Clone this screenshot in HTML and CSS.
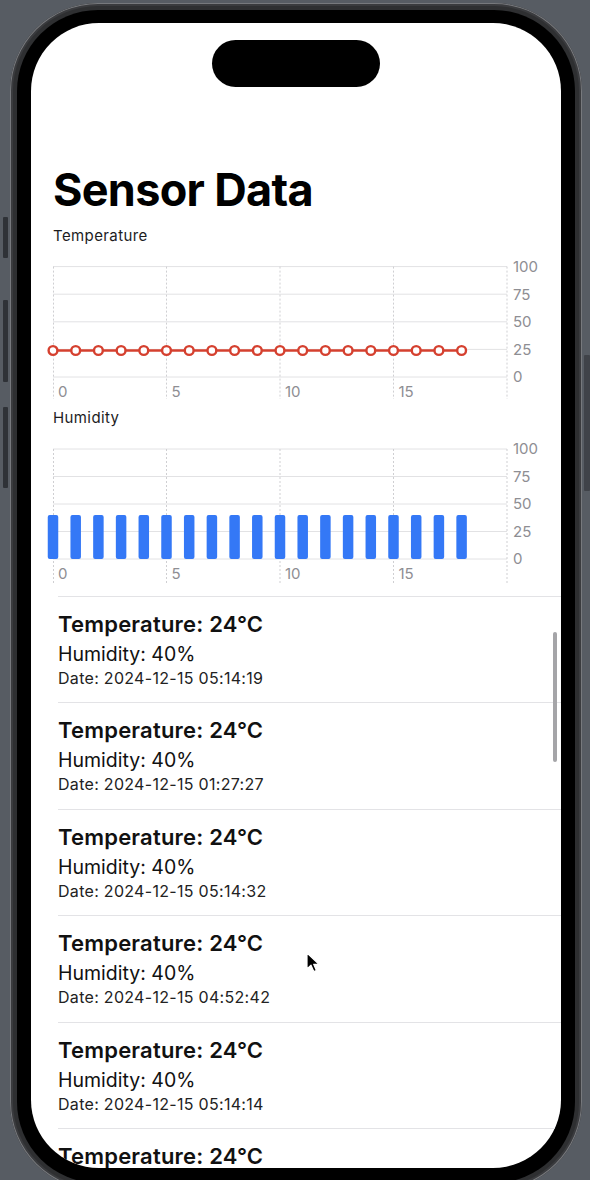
FILE: index.html
```html
<!DOCTYPE html>
<html lang="en">
<head>
<meta charset="utf-8">
<title>Sensor Data</title>
<link rel="stylesheet" href="styles.css">
</head>
<body>
<div class="phone">
  <span class="btn btn-action"></span>
  <span class="btn btn-vol-up"></span>
  <span class="btn btn-vol-down"></span>
  <span class="btn btn-power"></span>
  <div class="bezel">
    <div class="screen">
      <div class="island"></div>
      <h1 class="title">Sensor Data</h1>

      <div class="chart-label">Temperature</div>
      <svg class="chart" width="490" height="140" viewBox="0 0 490 140">
        <g class="hgrid">
          <line x1="0" y1="7.6" x2="454" y2="7.6"/>
          <line x1="0" y1="35.2" x2="454" y2="35.2"/>
          <line x1="0" y1="62.8" x2="454" y2="62.8"/>
          <line x1="0" y1="90.4" x2="454" y2="90.4"/>
          <line x1="0" y1="118" x2="454" y2="118"/>
        </g>
        <g class="vgrid">
          <line x1="0.5" y1="7.6" x2="0.5" y2="140"/>
          <line x1="113.5" y1="7.6" x2="113.5" y2="140"/>
          <line x1="227" y1="7.6" x2="227" y2="140"/>
          <line x1="340.5" y1="7.6" x2="340.5" y2="140"/>
          <line x1="454" y1="7.6" x2="454" y2="140"/>
        </g>
        <g class="ylabels">
          <text x="460" y="13">100</text>
          <text x="460" y="40.6">75</text>
          <text x="460" y="68.2">50</text>
          <text x="460" y="95.8">25</text>
          <text x="460" y="123.4">0</text>
        </g>
        <g class="xlabels">
          <text x="5" y="137.5">0</text>
          <text x="118.5" y="137.5">5</text>
          <text x="232" y="137.5">10</text>
          <text x="345.5" y="137.5">15</text>
        </g>
        <polyline class="temp-line" points="0,91.5 408.6,91.5"/>
        <g class="temp-dots">
          <circle cx="0" cy="91.5" r="4.4"/>
          <circle cx="22.7" cy="91.5" r="4.4"/>
          <circle cx="45.4" cy="91.5" r="4.4"/>
          <circle cx="68.1" cy="91.5" r="4.4"/>
          <circle cx="90.8" cy="91.5" r="4.4"/>
          <circle cx="113.5" cy="91.5" r="4.4"/>
          <circle cx="136.2" cy="91.5" r="4.4"/>
          <circle cx="158.9" cy="91.5" r="4.4"/>
          <circle cx="181.6" cy="91.5" r="4.4"/>
          <circle cx="204.3" cy="91.5" r="4.4"/>
          <circle cx="227" cy="91.5" r="4.4"/>
          <circle cx="249.7" cy="91.5" r="4.4"/>
          <circle cx="272.4" cy="91.5" r="4.4"/>
          <circle cx="295.1" cy="91.5" r="4.4"/>
          <circle cx="317.8" cy="91.5" r="4.4"/>
          <circle cx="340.5" cy="91.5" r="4.4"/>
          <circle cx="363.2" cy="91.5" r="4.4"/>
          <circle cx="385.9" cy="91.5" r="4.4"/>
          <circle cx="408.6" cy="91.5" r="4.4"/>
        </g>
      </svg>

      <div class="chart-label">Humidity</div>
      <svg class="chart" width="490" height="140" viewBox="0 0 490 140">
        <g class="hgrid">
          <line x1="0" y1="8" x2="454" y2="8"/>
          <line x1="0" y1="35.5" x2="454" y2="35.5"/>
          <line x1="0" y1="63" x2="454" y2="63"/>
          <line x1="0" y1="90.5" x2="454" y2="90.5"/>
          <line x1="0" y1="118" x2="454" y2="118"/>
        </g>
        <g class="vgrid">
          <line x1="0.5" y1="8" x2="0.5" y2="143"/>
          <line x1="113.5" y1="8" x2="113.5" y2="143"/>
          <line x1="227" y1="8" x2="227" y2="143"/>
          <line x1="340.5" y1="8" x2="340.5" y2="143"/>
          <line x1="454" y1="8" x2="454" y2="143"/>
        </g>
        <g class="ylabels">
          <text x="460" y="13.4">100</text>
          <text x="460" y="40.9">75</text>
          <text x="460" y="68.4">50</text>
          <text x="460" y="95.9">25</text>
          <text x="460" y="123.4">0</text>
        </g>
        <g class="xlabels">
          <text x="5" y="138">0</text>
          <text x="118.5" y="138">5</text>
          <text x="232" y="138">10</text>
          <text x="345.5" y="138">15</text>
        </g>
        <g class="bars">
          <rect x="-5.25" y="74" width="10.5" height="44" rx="2"/>
          <rect x="17.45" y="74" width="10.5" height="44" rx="2"/>
          <rect x="40.15" y="74" width="10.5" height="44" rx="2"/>
          <rect x="62.85" y="74" width="10.5" height="44" rx="2"/>
          <rect x="85.55" y="74" width="10.5" height="44" rx="2"/>
          <rect x="108.25" y="74" width="10.5" height="44" rx="2"/>
          <rect x="130.95" y="74" width="10.5" height="44" rx="2"/>
          <rect x="153.65" y="74" width="10.5" height="44" rx="2"/>
          <rect x="176.35" y="74" width="10.5" height="44" rx="2"/>
          <rect x="199.05" y="74" width="10.5" height="44" rx="2"/>
          <rect x="221.75" y="74" width="10.5" height="44" rx="2"/>
          <rect x="244.45" y="74" width="10.5" height="44" rx="2"/>
          <rect x="267.15" y="74" width="10.5" height="44" rx="2"/>
          <rect x="289.85" y="74" width="10.5" height="44" rx="2"/>
          <rect x="312.55" y="74" width="10.5" height="44" rx="2"/>
          <rect x="335.25" y="74" width="10.5" height="44" rx="2"/>
          <rect x="357.95" y="74" width="10.5" height="44" rx="2"/>
          <rect x="380.65" y="74" width="10.5" height="44" rx="2"/>
          <rect x="403.35" y="74" width="10.5" height="44" rx="2"/>
        </g>
      </svg>

      <ul class="readings">
        <li class="reading">
          <div class="r-temp">Temperature: 24°C</div>
          <div class="r-hum">Humidity: 40%</div>
          <div class="r-date">Date: 2024-12-15 05:14:19</div>
        </li>
        <li class="reading">
          <div class="r-temp">Temperature: 24°C</div>
          <div class="r-hum">Humidity: 40%</div>
          <div class="r-date">Date: 2024-12-15 01:27:27</div>
        </li>
        <li class="reading">
          <div class="r-temp">Temperature: 24°C</div>
          <div class="r-hum">Humidity: 40%</div>
          <div class="r-date">Date: 2024-12-15 05:14:32</div>
        </li>
        <li class="reading">
          <div class="r-temp">Temperature: 24°C</div>
          <div class="r-hum">Humidity: 40%</div>
          <div class="r-date">Date: 2024-12-15 04:52:42</div>
        </li>
        <li class="reading">
          <div class="r-temp">Temperature: 24°C</div>
          <div class="r-hum">Humidity: 40%</div>
          <div class="r-date">Date: 2024-12-15 05:14:14</div>
        </li>
        <li class="reading">
          <div class="r-temp">Temperature: 24°C</div>
        </li>
      </ul>

      <div class="scrollbar"></div>
      <svg class="cursor" width="14" height="22" viewBox="0 0 14 22">
        <path d="M1 1 L1 17 L5 13.2 L7.8 19.6 L10.4 18.5 L7.7 12.3 L13 12.3 Z" fill="#000" stroke="#fff" stroke-width="1.2" stroke-linejoin="round"/>
      </svg>
    </div>
  </div>
</div>
</body>
</html>
```

FILE: styles.css
```css
html, body {
  margin: 0;
  padding: 0;
}

body {
  background: #575c63;
  height: 1180px;
  overflow: hidden;
  font-family: Inter, "Noto Sans", "Liberation Sans", sans-serif;
}

.phone {
  position: relative;
  margin: 3px 0 0 10px;
  width: 572px;
  height: 1187px;
  box-sizing: border-box;
  padding: 7px;
  border-radius: 88px;
  background: #2e2f31;
  box-shadow: inset 0 0 0 1px #77797d, inset 0 0 0 3px #3a3b3e;
}

.btn {
  position: absolute;
  width: 5px;
  background: #2f3237;
  border-radius: 1px;
}
.btn-action { left: -7px; top: 214px; height: 41px; }
.btn-vol-up { left: -7px; top: 297px; height: 82px; }
.btn-vol-down { left: -7px; top: 404px; height: 81px; }
.btn-power { right: -8px; top: 352px; height: 136px; width: 6px; background: #404349; }

.bezel {
  height: 100%;
  box-sizing: border-box;
  padding: 13px 14px 0 14px;
  background: #000;
  border-radius: 81px;
}

.screen {
  position: relative;
  height: 1145px;
  background: #fff;
  border-radius: 68px;
  overflow: hidden;
  padding: 0 0 0 22px;
  box-sizing: border-box;
}

.island {
  width: 168px;
  height: 47px;
  margin: 17px 0 0 159px;
  background: #000;
  border-radius: 24px;
}

.title {
  margin: 76px 0 0 0;
  font-size: 45px;
  line-height: 54px;
  font-weight: 700;
  letter-spacing: -0.7px;
  color: #000;
}

.chart-label {
  margin-top: 9px;
  font-size: 15px;
  line-height: 20px;
  letter-spacing: 0.4px;
  color: #1c1c1e;
}

.chart {
  display: block;
  margin-top: 13px;
  overflow: visible;
}

.hgrid line {
  stroke: #e2e2e4;
  stroke-width: 1;
}
.vgrid line {
  stroke: #cfcfd2;
  stroke-width: 1;
  stroke-dasharray: 2 2;
}
.ylabels text, .xlabels text {
  font-family: Inter, "Noto Sans", sans-serif;
  font-size: 15px;
  fill: #8e8e93;
}

.temp-line {
  fill: none;
  stroke: #d5402f;
  stroke-width: 2.4;
}
.temp-dots circle {
  fill: #fff;
  stroke: #d5402f;
  stroke-width: 2.4;
}

.bars rect {
  fill: #3478f6;
}

.readings {
  list-style: none;
  margin: 15px 0 0 5px;
  padding: 0;
}

.reading {
  border-top: 1px solid #e3e3e6;
  padding: 12px 0 15.4px 0;
  color: #111;
}

.r-temp {
  font-size: 22px;
  font-weight: 600;
  line-height: 30px;
  letter-spacing: 0.2px;
}
.r-hum {
  font-size: 19.5px;
  line-height: 30px;
}
.r-date {
  font-size: 16px;
  line-height: 18px;
  letter-spacing: 0.3px;
  color: #222;
}

.scrollbar {
  position: absolute;
  left: 522px;
  top: 609px;
  width: 4px;
  height: 130px;
  border-radius: 2px;
  background: #a5a5a8;
}

.cursor {
  position: absolute;
  left: 275px;
  top: 929px;
}
```
